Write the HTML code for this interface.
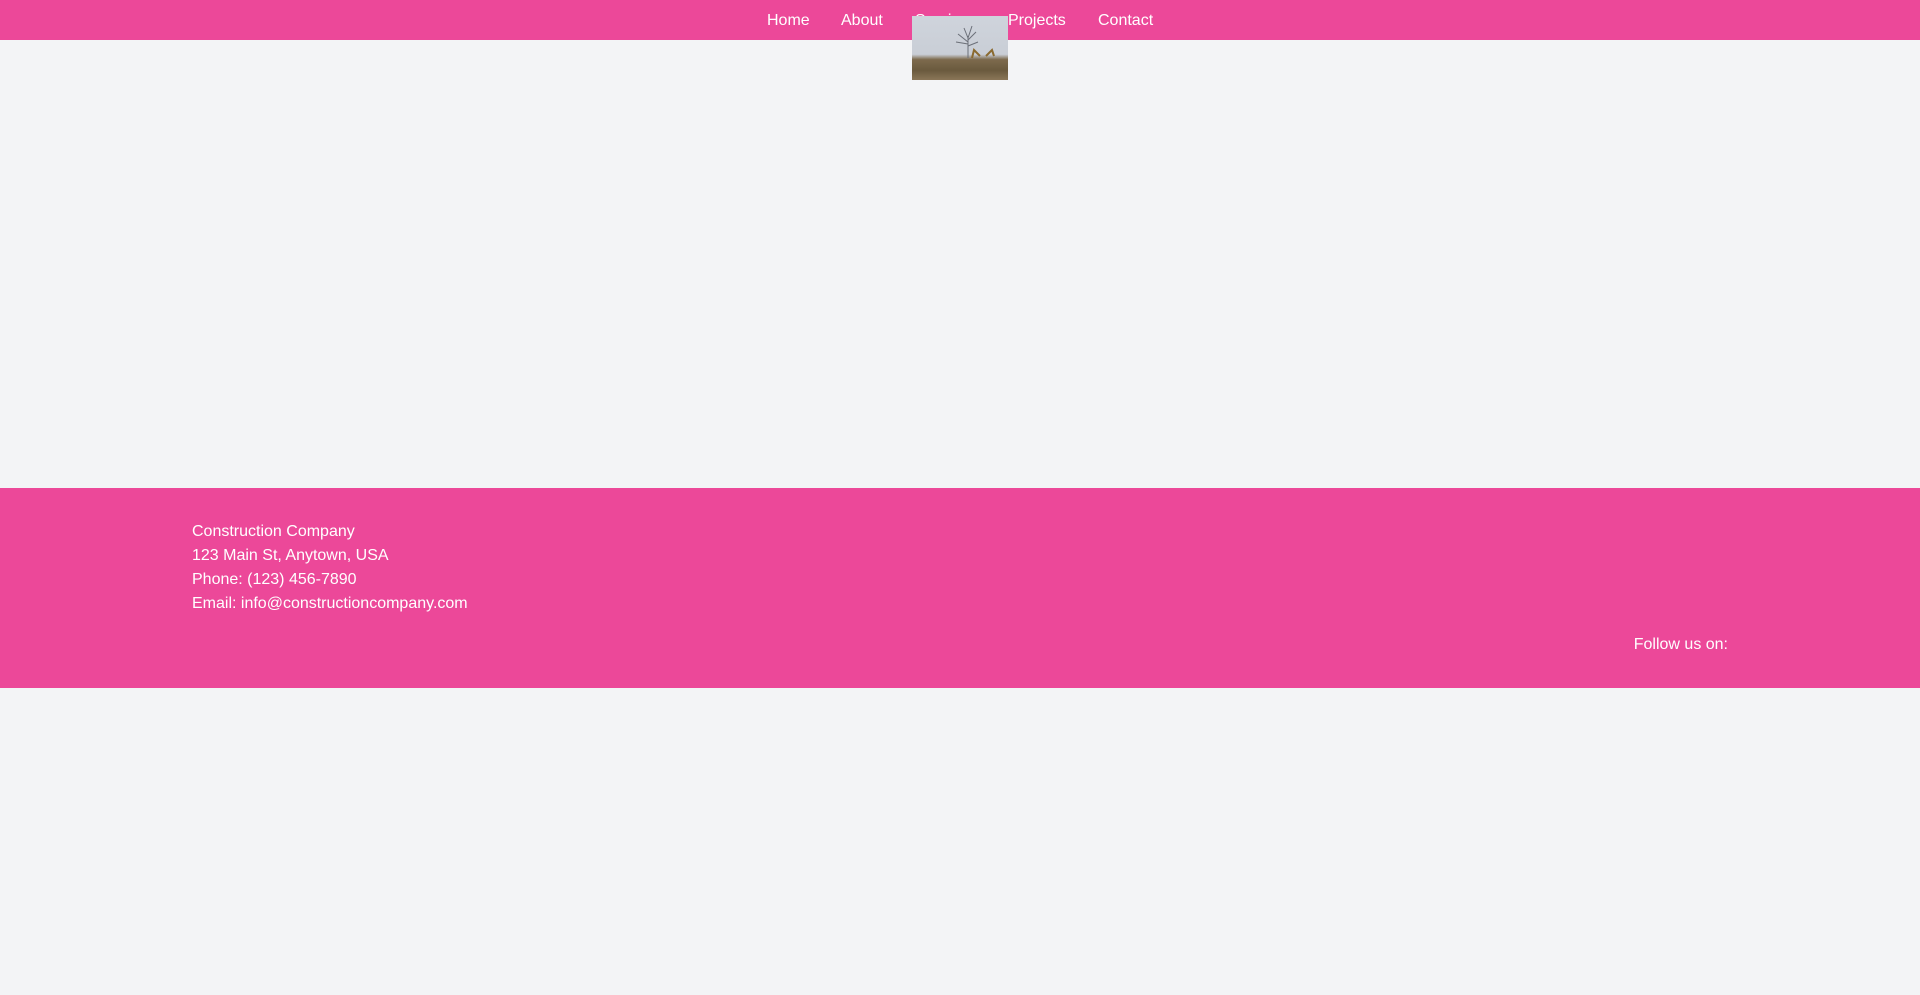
<!DOCTYPE html>
<html><head><meta charset="utf-8"><style>
*{margin:0;padding:0;box-sizing:border-box}
body{width:1920px;height:995px;background:#f3f4f6;font-family:"Liberation Sans",Arial,sans-serif;color:#fff;position:relative;overflow:hidden}
nav{position:absolute;left:0;top:0;width:1920px;height:40px;background:#ec4899}
nav a{position:absolute;top:11px;font-size:16px;line-height:20px;color:#fff;text-decoration:none}
.img{position:absolute;left:912px;top:16px;width:96px;height:64px;overflow:hidden;background:linear-gradient(#cfd4dc 0%,#c9ced6 60%,#7d6a4d 68%,#6a5a3e 85%,#8a7658 100%)}
footer{position:absolute;left:0;top:488px;width:1920px;height:200px;background:#ec4899}
.info{position:absolute;left:192px;top:32px;font-size:16px;line-height:24px}
.follow{position:absolute;right:192px;top:147px;font-size:16px;line-height:20px}
</style></head><body>
<nav>
<a style="left:767px">Home</a>
<a style="left:841px">About</a>
<a style="left:915px">Services</a>
<a style="left:1008px">Projects</a>
<a style="left:1098px">Contact</a>
</nav>
<div class="img"><svg width="96" height="64" viewBox="0 0 96 64">
<g stroke="#6b6f78" stroke-width="1" fill="none"><line x1="56" y1="42" x2="56" y2="20"/><path d="M56 26 L46 18 M56 24 L64 16 M56 30 L66 26 M56 28 L44 26 M56 22 L52 12 M56 22 L60 10"/></g>
<path d="M60 42 L62 34 L68 40 M74 40 L80 34 L82 40" stroke="#8a6a30" stroke-width="2" fill="none"/>
</svg></div>
<footer>
<div class="info">Construction Company<br>123 Main St, Anytown, USA<br>Phone: (123) 456-7890<br>Email: info@constructioncompany.com</div>
<div class="follow">Follow us on:</div>
</footer>
</body></html>
